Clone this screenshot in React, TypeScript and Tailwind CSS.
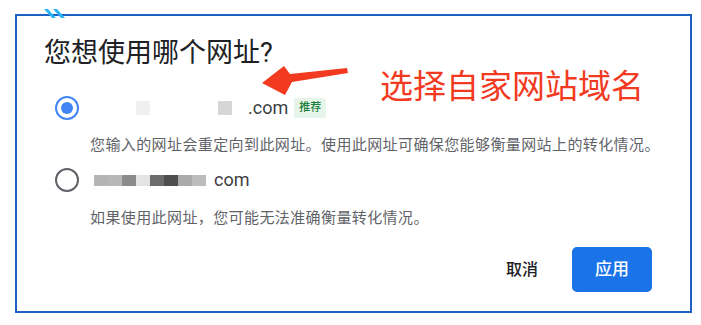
import React from "react";

export default function App() {
  const bar2 = ["#b4b4b4", "#b8b8b8", "#8c8c8c", "#e4e4e4", "#6c6c6c", "#4e4e4e", "#aaaaaa", "#bcbcbc"];
  return (
    <div className="relative w-[701px] h-[325px] overflow-hidden bg-white font-['Roboto','Noto_Sans_CJK_SC',sans-serif]">
      <div className="ml-[15px] mt-[14px] flex h-[299px] w-[677px] flex-col border-2 border-[#1f60c3] pl-[27px] pr-[38px] pt-[21px]">
        <h1 className="text-[27px] leading-[33px] font-normal text-[#202124]">您想使用哪个网址?</h1>

        <div className="mt-[26px] flex h-[24px] items-center">
          <div className="ml-[11px] flex h-[24px] w-[24px] items-center justify-center rounded-full border-[2.5px] border-[#4285f4]">
            <div className="h-[12px] w-[12px] rounded-full bg-[#4285f4]" />
          </div>
          <div className="ml-[57px] h-[14px] w-[14px] bg-[#f0f0f0]" />
          <div className="ml-[68px] h-[14px] w-[14px] bg-[#d6d6d6]" />
          <span className="ml-[16px] text-[18px] leading-[24px] text-[#3c4043]">.com</span>
          <span className="ml-[6px] flex h-[20px] items-center rounded-[2px] bg-[#e6f4ea] px-[5px] text-[11px] font-medium text-[#188038]">推荐</span>
        </div>

        <p className="ml-[46px] mt-[15px] whitespace-nowrap text-[15px] leading-[20px] tracking-[0.4px] text-[#5f6368]">
          您输入的网址会重定向到此网址。使用此网址可确保您能够衡量网站上的转化情况。
        </p>

        <div className="mt-[13px] flex h-[24px] items-center">
          <div className="ml-[11px] h-[24px] w-[24px] rounded-full border-[2.5px] border-[#5f6368]" />
          <div className="ml-[15px] flex h-[11px]">
            {bar2.map((c, i) => (
              <div key={i} className="h-[11px] w-[14px]" style={{ backgroundColor: c }} />
            ))}
          </div>
          <span className="ml-[8px] text-[18px] leading-[24px] text-[#3c4043]">com</span>
        </div>

        <p className="ml-[46px] mt-[16px] whitespace-nowrap text-[15px] leading-[20px] tracking-[0.4px] text-[#5f6368]">
          如果使用此网址，您可能无法准确衡量转化情况。
        </p>

        <div className="mt-[19px] flex items-center justify-end gap-[34px]">
          <span className="text-[16px] font-medium text-[#202124]">取消</span>
          <button className="h-[45px] w-[80px] rounded-[5px] bg-[#1a73e8] text-[17px] font-medium text-white">应用</button>
        </div>
      </div>

      <div className="absolute left-[380px] top-[70px] text-[33px] leading-[33px] text-[#f13a1f]">选择自家网站域名</div>

      <svg className="pointer-events-none absolute left-0 top-0" width="701" height="325" viewBox="0 0 701 325">
        <polygon points="262,83 284,66 290,74 347,68 348,73 292,82 285,95" fill="#f23a20" />
        <polygon points="44,9 48,9 56,18 52,18" fill="#2bb5f5" />
        <polygon points="53,9 57,9 65,18 61,18" fill="#2bb5f5" />
      </svg>
    </div>
  );
}
